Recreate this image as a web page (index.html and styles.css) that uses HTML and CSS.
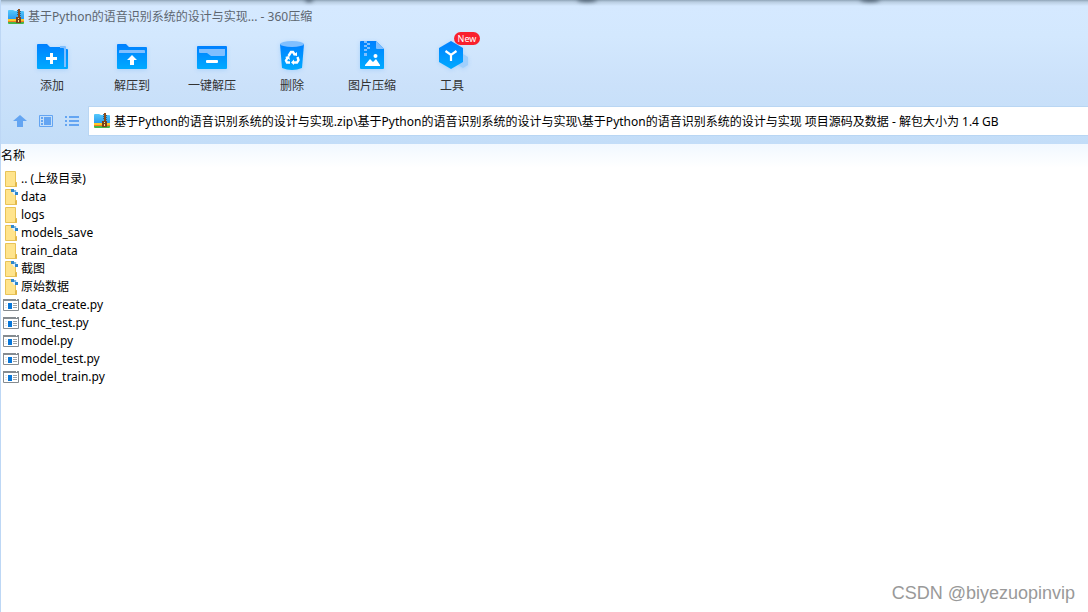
FILE: index.html
```html
<!DOCTYPE html>
<html lang="zh-CN">
<head>
<meta charset="utf-8">
<title>360压缩</title>
<link rel="stylesheet" href="styles.css">
</head>
<body>
<svg class="defs" aria-hidden="true">
  <defs>
    <linearGradient id="blue" x1="0" y1="0" x2="0" y2="1"><stop offset="0" stop-color="#0080ff"/><stop offset="1" stop-color="#00aaff"/></linearGradient>
    <linearGradient id="sky" x1="0" y1="0" x2="0" y2="1"><stop offset="0" stop-color="#55c8fb"/><stop offset="1" stop-color="#2497ee"/></linearGradient>
  </defs>
  <symbol id="archive" viewBox="0 0 16 16">
    <path d="M0 2q0-1 1-1h4l2 1h8q1 0 1 1v8H0z" fill="url(#sky)"/>
    <path d="M0 10h16v2H0z" fill="#ffc928"/><path d="M0 12h16v1H0z" fill="#f47b20"/><path d="M0 13h16v1q0 1-1 1H1q-1 0-1-1z" fill="#45b649"/>
    <path d="M10 0h2v9h-2z" fill="#8c4c19"/><path d="M9 1h1v1H9zm3 1h1v1h-1zM9 3h1v1H9zm3 1h1v1h-1zM9 5h1v1H9zm3 1h1v1h-1z" fill="#2b6390"/>
    <path d="M8 8h5v6H8z" fill="#7a421a"/><path d="M10 9h1v1h-1zm0 2h1v2h-1z" fill="#ffe08a"/>
  </symbol>
  <symbol id="folder" viewBox="0 0 16 16">
    <path d="M2.500.5h10v11h1v4h-11z" fill="#ffe48c" stroke="#e8c357"/><path d="M12.500 11.500h1v4h-1z" fill="#ffedaa" stroke="#e2b84a"/>
  </symbol>
  <symbol id="folder-full" viewBox="0 0 16 16">
    <path d="M2.500.5h6l4 4v7h1v4h-11z" fill="#ffe48c" stroke="#e8c357"/><path d="M12.500 11.500h1v4h-1z" fill="#ffedaa" stroke="#e2b84a"/>
    <path d="M9 1h5v5h-3L9 3z" fill="#e7f3fb"/><path d="M8 0h3v3H8zm4 3h3v3h-3z" fill="#2e87cd"/><path d="M11 1h2v2h-2z" fill="#7fb9e2"/>
  </symbol>
  <symbol id="program" viewBox="0 0 16 16">
    <path d="M.5 2.500h15v11H.5z" fill="#fff" stroke="#858b90"/><path d="M0 2h16v2H0z" fill="#858b90"/><path d="M13 2h1v1h-1z" fill="#fff"/>
    <path d="M5 6h4v6H5z" fill="#0876d8"/><path d="M2 6h2v1H2zm0 2h2v1H2zm0 2h2v1H2z" fill="#e2e5e8"/><path d="M10 6h4v1h-4zm0 2h4v1h-4zm0 2h4v1h-4z" fill="#9ba1a6"/>
  </symbol>
</svg>
<div class="app">
  <header class="chrome">
    <i class="shade shade-a"></i><i class="shade shade-b"></i><i class="shade shade-c"></i>
    <div class="titlebar">
      <svg class="icon"><use href="#archive"/></svg>
      <span>基于Python的语音识别系统的设计与实现...&nbsp;-&nbsp;360压缩</span>
    </div>
    <nav class="toolbar">
      <button class="tool" type="button">
        <svg class="glyph" viewBox="0 0 32 32">
          <path d="M1 5q0-1 1-1h9l3 3h16v2h1q1 0 1 1v18q0 1-1 1H2q-1 0-1-1z" fill="url(#blue)"/>
          <path d="M24 6h5q1 0 1 1v20h-2V9q0-1-1-1h-3z" fill="#80bfff"/>
          <path d="M10 18.500h11M15.500 13v11" stroke="#fff" stroke-width="3"/>
        </svg><span>添加</span>
      </button>
      <button class="tool" type="button">
        <svg class="glyph" viewBox="0 0 32 32">
          <path d="M1 5q0-1 1-1h8l3 3h17q1 0 1 1v20q0 1-1 1H2q-1 0-1-1z" fill="url(#blue)"/>
          <path d="M3 13v-2q0-1 1-1h24q1 0 1 1v2z" fill="#80bfff"/><path d="M16 15l5 5h-3v5h-4v-5h-3z" fill="#fff"/>
        </svg><span>解压到</span>
      </button>
      <button class="tool" type="button">
        <svg class="glyph" viewBox="0 0 32 32">
          <rect x="1" y="6" width="30" height="23" rx="1" fill="url(#blue)"/>
          <path d="M3 9h26v6q0 1-1 1H15l-4-3H4q-1 0-1-1z" fill="#80bfff"/><rect x="10" y="20" width="12" height="3" rx="1" fill="#fff"/>
        </svg><span>一键解压</span>
      </button>
      <button class="tool" type="button">
        <svg class="glyph" viewBox="0 0 32 32">
          <path d="M4 4l2 24q10 4 20 0l2-24z" fill="url(#blue)"/><ellipse cx="16" cy="4" rx="12" ry="3" fill="#80bfff"/>
          <g fill="none" stroke="#fff" stroke-width="2.400"><path d="M12.500 16l2.500-4h2l2 3M21.500 17l1 3-1.500 2.500h-4M14 22.500h-3l-1-2 2-3.500"/></g>
          <path d="M17 15l4 1v-4zm1 4.500v5.500l-3-2.500zM9 17l4-1 1 4z" fill="#fff"/>
        </svg><span>删除</span>
      </button>
      <button class="tool" type="button">
        <svg class="glyph" viewBox="0 0 32 32">
          <path d="M4 2q0-1 1-1h15l8 8v19q0 1-1 1H5q-1 0-1-1z" fill="url(#blue)"/><path d="M20 1l8 8h-7q-1 0-1-1z" fill="#80bfff"/>
          <path d="M8 1h3v2H8zm3 2h3v2h-3zM8 5h3v2H8zm3 2h3v2h-3zM8 9h3v2H8zm0 4h3v3H8z" fill="#80bfff"/>
          <path d="M9 26v-1l5-6 3 3 3-3 4 6v1z" fill="#fff"/><circle cx="19.500" cy="16" r="2" fill="#fff"/>
        </svg><span>图片压缩</span>
      </button>
      <button class="tool" type="button">
        <svg class="glyph" viewBox="0 0 32 32">
          <path d="M27 14l5 3v8l-5 3-5-3v-8z" fill="#a0cffc"/>
          <path d="M15 1l12 7v14l-12 7-12-7V8z" fill="url(#blue)"/><path d="M9.500 11l5.500 4 5.500-4M15 15v6" fill="none" stroke="#fff" stroke-width="2.200"/>
        </svg><span>工具</span><b class="badge">New</b>
      </button>
    </nav>
    <div class="location">
      <button class="small" type="button" aria-label="向上"><svg class="icon" viewBox="0 0 16 16"><path d="M8 2l7 6h-4v6H5V8H1z" fill="#64a5f2"/></svg></button>
      <button class="small" type="button" aria-label="预览"><svg class="icon" viewBox="0 0 16 16"><path d="M1.500 2.500h13v11h-13z" fill="none" stroke="#64a5f2"/><path d="M6 4h7v8H6zM3 4h2v2H3zm0 3h2v2H3zm0 3h2v2H3z" fill="#64a5f2"/></svg></button>
      <button class="small" type="button" aria-label="列表"><svg class="icon" viewBox="0 0 16 16"><path d="M1 3h2v2H1zm4 0h10v2H5zM1 7h2v2H1zm4 0h10v2H5zm-4 4h2v2H1zm4 0h10v2H5z" fill="#64a5f2"/></svg></button>
      <label class="address">
        <svg class="icon"><use href="#archive"/></svg>
        <input type="text" aria-label="地址" value="基于Python的语音识别系统的设计与实现.zip\基于Python的语音识别系统的设计与实现\基于Python的语音识别系统的设计与实现 项目源码及数据 - 解包大小为 1.4 GB">
      </label>
    </div>
  </header>
  <main class="content">
    <table class="files">
      <thead><tr><th scope="col">名称</th></tr></thead>
      <tbody>
        <tr><td><div class="file"><svg class="icon"><use href="#folder"/></svg>.. (上级目录)</div></td></tr>
        <tr><td><div class="file"><svg class="icon"><use href="#folder-full"/></svg>data</div></td></tr>
        <tr><td><div class="file"><svg class="icon"><use href="#folder"/></svg>logs</div></td></tr>
        <tr><td><div class="file"><svg class="icon"><use href="#folder-full"/></svg>models_save</div></td></tr>
        <tr><td><div class="file"><svg class="icon"><use href="#folder"/></svg>train_data</div></td></tr>
        <tr><td><div class="file"><svg class="icon"><use href="#folder-full"/></svg>截图</div></td></tr>
        <tr><td><div class="file"><svg class="icon"><use href="#folder-full"/></svg>原始数据</div></td></tr>
        <tr><td><div class="file"><svg class="icon"><use href="#program"/></svg>data_create.py</div></td></tr>
        <tr><td><div class="file"><svg class="icon"><use href="#program"/></svg>func_test.py</div></td></tr>
        <tr><td><div class="file"><svg class="icon"><use href="#program"/></svg>model.py</div></td></tr>
        <tr><td><div class="file"><svg class="icon"><use href="#program"/></svg>model_test.py</div></td></tr>
        <tr><td><div class="file"><svg class="icon"><use href="#program"/></svg>model_train.py</div></td></tr>
      </tbody>
    </table>
  </main>
  <div class="watermark">CSDN @biyezuopinvip</div>
</div>
</body>
</html>
```
FILE: styles.css
```css
* { box-sizing: border-box; }
body { margin: 0; font: 12px/18px "Noto Sans", "Noto Sans CJK SC", sans-serif; color: #000; background: #fff; }
button, input { font: inherit; color: inherit; border: 0; padding: 0; margin: 0; background: none; }
.defs { position: absolute; width: 0; height: 0; }
.icon { display: block; flex: none; width: 16px; height: 16px; }
.app { position: relative; display: flex; flex-direction: column; min-height: 100vh; border-left: 1px solid #bdd7f5; }
.chrome {
  position: relative;
  overflow: hidden;
  background: linear-gradient(#8fa4b7 0, #b9cde1 2px, #d5e9ff 6px, #d3e8fe 36px, #cbe1fa 85px, #c5dff9 125px, #c3ddf8 100%);
}
.shade { position: absolute; top: -3px; width: 20px; height: 5px; border-radius: 50%; background: #4c5e70; filter: blur(2px); }
.shade-a { left: 28%; width: 8px; }
.shade-b { left: 53%; }
.shade-c { left: 79%; }
.titlebar { display: flex; align-items: center; gap: 4px; height: 34px; padding-left: 7px; color: #5d6670; }
.titlebar span { word-spacing: normal; }
.toolbar { display: flex; height: 72px; padding: 6px 0 0 11px; }
.tool { position: relative; display: flex; flex-direction: column; align-items: center; gap: 5px; width: 80px; color: #333; }
.glyph { width: 32px; height: 32px; overflow: visible; filter: drop-shadow(0 1px 2px #72b9fa66); }
.badge { position: absolute; left: 42px; top: -8px; width: 26px; height: 13px; border-radius: 7px; background: #f9202d; color: #fff; font: 9px/13px "Noto Sans", sans-serif; }
.location { display: flex; align-items: center; gap: 10px; height: 38px; padding: 0 0 8px 11px; }
.address { display: flex; flex: 1; align-items: center; gap: 4px; height: 30px; margin-left: -2px; padding-left: 5px; background: #fff; border: 1px solid #b9d6f3; border-right: 0; }
.address input { flex: 1; min-width: 0; height: 28px; outline: 0; }
.content { flex: 1; background: linear-gradient(#f1f8ff, #fff 24px); }
.files { width: 100%; border-collapse: collapse; }
.files th { height: 26px; padding: 0 0 2px; text-align: left; font-weight: 400; }
.files td { padding: 0; }
.file { display: flex; align-items: center; gap: 2px; height: 18px; padding-left: 2px; }
.watermark { position: absolute; right: 13px; bottom: 7px; color: #999; font: 18px/24px "Liberation Sans", sans-serif; }
```
